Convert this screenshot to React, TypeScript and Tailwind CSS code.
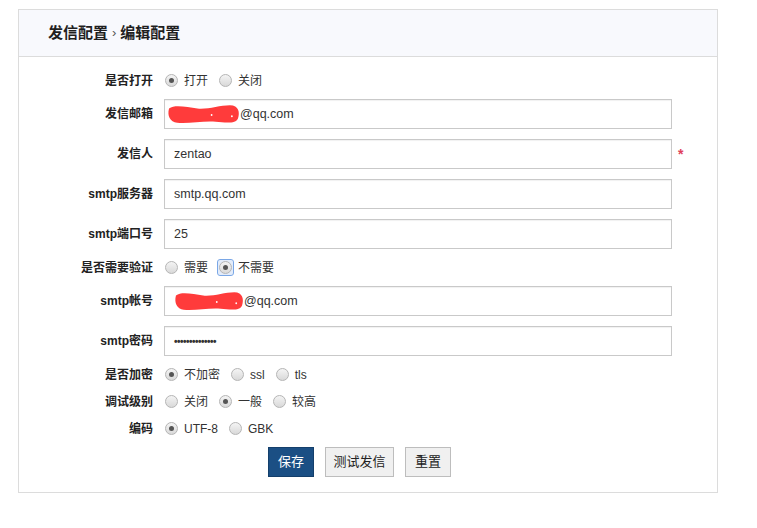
import { useState } from 'react';

const FONT = { fontFamily: '"Liberation Sans", Arial, "Noto Sans CJK SC", sans-serif' };

type Opt = { label: string; checked?: boolean; focus?: boolean };

function Radio({ checked, focus }: { checked?: boolean; focus?: boolean }) {
  return (
    <span
      className={
        'inline-flex h-[15px] w-[15px] items-center justify-center ' +
        (focus ? 'rounded-[2px] outline outline-1 outline-[#7aa7e6] bg-[#e3ecfa]' : '')
      }
    >
      <span className="flex h-[13px] w-[13px] items-center justify-center rounded-full border border-[#b5b5b5] bg-gradient-to-b from-[#f4f4f4] to-[#d9d9d9]">
        {checked && <span className="h-[5px] w-[5px] rounded-full bg-[#555]" />}
      </span>
    </span>
  );
}

function RadioGroup({ options }: { options: Opt[] }) {
  return (
    <div className="flex items-center gap-[10px] text-[12px] text-[#333]">
      {options.map((o) => (
        <label key={o.label} className="flex items-center gap-[5px]">
          <Radio checked={o.checked} focus={o.focus} />
          <span>{o.label}</span>
        </label>
      ))}
    </div>
  );
}

function Redact({ width }: { width: number }) {
  return (
    <svg width={width} height="22" viewBox="0 0 72 20" preserveAspectRatio="none" className="shrink-0">
      <path
        d="M2 5 C8 1 20 4 30 5 C40 6 52 2 62 2 C71 2 72 9 70 14 C68 19 58 18 48 17 C36 16 22 19 10 18 C3 17 0 12 2 5 Z"
        fill="#ff3b3b"
      />
      <circle cx="44" cy="11" r="0.9" fill="#fff" />
      <circle cx="64" cy="12" r="0.9" fill="#fff" />
    </svg>
  );
}

function Field({ children }: { children: React.ReactNode }) {
  return (
    <div className="flex h-[30px] w-[508px] items-center border border-[#c9c9c9] bg-white px-[9px] text-[12.5px] text-[#333] shadow-[inset_0_1px_1px_rgba(0,0,0,0.06)]">
      {children}
    </div>
  );
}

function Row({ label, children, tall, extra }: { label: string; children: React.ReactNode; tall?: boolean; extra?: React.ReactNode }) {
  return (
    <div className={'flex items-center ' + (tall ? 'h-[30px]' : 'h-[17px]')}>
      <div className="w-[134px] shrink-0 text-right text-[12px] font-bold text-[#222]">{label}</div>
      <div className="ml-[11px]">{children}</div>
      {extra}
    </div>
  );
}

export default function App() {
  const [pwd] = useState('••••••••••••••');
  return (
    <div className="min-h-[528px] w-[757px] bg-white pt-[9px] pl-[18px]" style={FONT}>
      <div className="w-[700px] border border-[#dcdcdc]">
        <div className="flex h-[47px] items-center border-b border-[#dcdcdc] bg-[#f8f9fd] pl-[29px] text-[15px] font-bold text-[#1f1f1f]">
          发信配置
          <span className="mx-[4px] text-[13px] font-normal text-[#555]">›</span>
          编辑配置
        </div>
        <div className="flex flex-col gap-[10px] pt-[15px] pb-[15px]">
          <Row label="是否打开">
            <RadioGroup options={[{ label: '打开', checked: true }, { label: '关闭' }]} />
          </Row>
          <Row label="发信邮箱" tall>
            <Field>
              <span className="-ml-[7px]">
                <Redact width={73} />
              </span>
              <span>@qq.com</span>
            </Field>
          </Row>
          <Row label="发信人" tall extra={<span className="ml-[6px] text-[14px] font-bold text-[#e0405a]">*</span>}>
            <Field>zentao</Field>
          </Row>
          <Row label="smtp服务器" tall>
            <Field>smtp.qq.com</Field>
          </Row>
          <Row label="smtp端口号" tall>
            <Field>25</Field>
          </Row>
          <Row label="是否需要验证">
            <RadioGroup options={[{ label: '需要' }, { label: '不需要', checked: true, focus: true }]} />
          </Row>
          <Row label="smtp帐号" tall>
            <Field>
              <Redact width={70} />
              <span>@qq.com</span>
            </Field>
          </Row>
          <Row label="smtp密码" tall>
            <Field>
              <span className="text-[10px] font-bold tracking-[-0.5px]">{pwd}</span>
            </Field>
          </Row>
          <Row label="是否加密">
            <RadioGroup options={[{ label: '不加密', checked: true }, { label: 'ssl' }, { label: 'tls' }]} />
          </Row>
          <Row label="调试级别">
            <RadioGroup options={[{ label: '关闭' }, { label: '一般', checked: true }, { label: '较高' }]} />
          </Row>
          <Row label="编码">
            <RadioGroup options={[{ label: 'UTF-8', checked: true }, { label: 'GBK' }]} />
          </Row>
          <div className="flex h-[30px] items-center gap-[11px] pl-[249px] text-[13px]">
            <button className="h-[30px] w-[46px] border border-[#143f6b] bg-[#1b4f84] text-white">保存</button>
            <button className="h-[30px] w-[69px] border border-[#bdbdbd] bg-[#f0f0f0] text-[#222]">测试发信</button>
            <button className="h-[30px] w-[46px] border border-[#bdbdbd] bg-[#f0f0f0] text-[#222]">重置</button>
          </div>
        </div>
      </div>
    </div>
  );
}
